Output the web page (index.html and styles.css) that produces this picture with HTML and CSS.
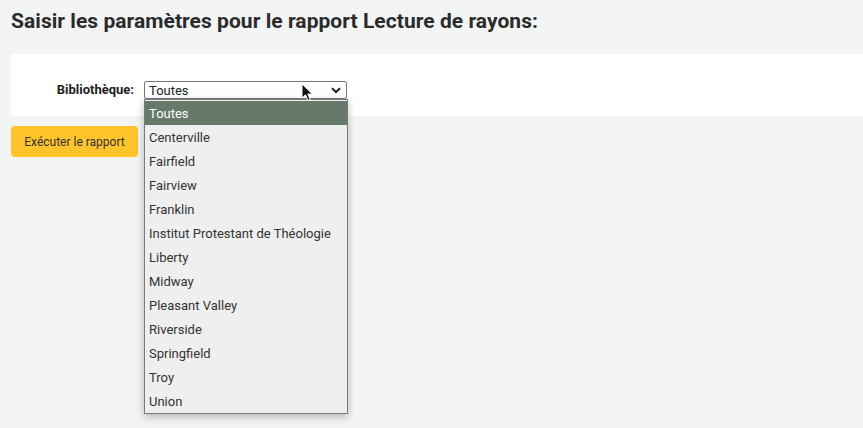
FILE: index.html
```html
<!DOCTYPE html>
<html lang="fr">
<head>
<meta charset="utf-8">
<link rel="stylesheet" href="styles.css">
</head>
<body>
<main class="page">
  <h1 class="title">Saisir les paramètres pour le rapport Lecture de rayons:</h1>
  <form class="panel">
    <div class="row">
      <label class="label">Bibliothèque:</label>
      <div class="select-wrap">
        <div class="select">
          <span>Toutes</span>
          <svg class="chev" width="10" height="7" viewBox="0 0 10 7"><path d="M1 1.2 L5 5 L9 1.2" fill="none" stroke="#222" stroke-width="2"/></svg>
        </div>
        <ul class="dropdown">
          <li class="opt active">Toutes</li>
          <li class="opt">Centerville</li>
          <li class="opt">Fairfield</li>
          <li class="opt">Fairview</li>
          <li class="opt">Franklin</li>
          <li class="opt">Institut Protestant de Théologie</li>
          <li class="opt">Liberty</li>
          <li class="opt">Midway</li>
          <li class="opt">Pleasant Valley</li>
          <li class="opt">Riverside</li>
          <li class="opt">Springfield</li>
          <li class="opt">Troy</li>
          <li class="opt">Union</li>
        </ul>
        <svg class="cursor" width="14" height="20" viewBox="0 0 14 20"><path d="M1 1 L1 15 L4.5 11.8 L7 17.5 L9.2 16.5 L6.8 11 L11.5 11 Z" fill="#111" stroke="#fff" stroke-width="1"/></svg>
      </div>
    </div>
  </form>
  <div class="actions">
    <button class="btn" type="button">Exécuter le rapport</button>
  </div>
</main>
</body>
</html>
```
FILE: styles.css
```css
html, body {
  margin: 0;
  padding: 0;
  background: #f3f4f4;
  font-family: Roboto, "Liberation Sans", sans-serif;
  color: #333;
}
.page {
  padding: 0 0 0 11px;
  min-height: 428px;
  box-sizing: border-box;
}
.title {
  margin: 0;
  padding-top: 7px;
  font-size: 21px;
  font-weight: 700;
  line-height: 28px;
  color: #2b2b2b;
  height: 47px;
  letter-spacing: 0.05px;
}
.panel {
  background: #fff;
  height: 62px;
  display: flex;
  align-items: flex-start;
  padding-top: 27px;
  box-sizing: border-box;
}
.row {
  display: flex;
  align-items: center;
}
.label {
  width: 123px;
  text-align: right;
  font-weight: 700;
  font-size: 13px;
  color: #222;
  padding-right: 10px;
  line-height: 16px;
}
.select-wrap {
  position: relative;
}
.select {
  width: 203px;
  height: 18px;
  box-sizing: border-box;
  border: 1px solid #767676;
  border-radius: 2px;
  background: #fff;
  font-size: 13px;
  color: #222;
  display: flex;
  align-items: center;
  justify-content: space-between;
  padding: 0 4px 0 4px;
  line-height: 16px;
}
.select span { padding-top: 2px; }
.chev { margin-right: 1px; }
.dropdown {
  position: absolute;
  top: 18px;
  left: 0;
  width: 204px;
  box-sizing: border-box;
  margin: 0;
  padding: 1px 0 0;
  list-style: none;
  background: #efefef;
  border: 1px solid #7a7a7a;
  box-shadow: 0 3px 8px rgba(0,0,0,0.25);
  z-index: 10;
}
.opt {
  height: 24px;
  line-height: 25px;
  font-size: 13px;
  color: #333;
  padding-left: 4px;
  white-space: nowrap;
}
.opt.active {
  background: #66796a;
  color: #fff;
}
.cursor {
  position: absolute;
  left: 157px;
  top: 2px;
  z-index: 20;
}
.actions {
  padding-top: 10px;
}
.btn {
  width: 127px;
  height: 31px;
  background: #ffc32b;
  border: none;
  border-radius: 4px;
  font-family: Roboto, "Liberation Sans", sans-serif;
  font-size: 12px;
  color: #333;
  padding: 0;
  cursor: pointer;
}
```
